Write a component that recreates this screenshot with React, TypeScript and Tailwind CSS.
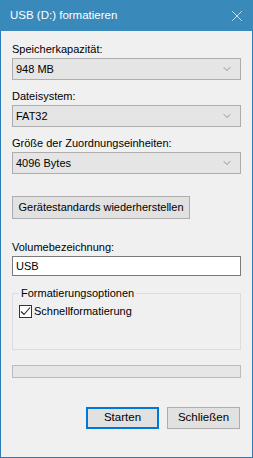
import { ChevronDown, X } from 'lucide-react';

const FONT = { fontFamily: '"Liberation Sans", "Noto Sans", sans-serif' };

function Combo({ value }: { value: string }) {
  return (
    <div className="mt-px flex h-[22px] w-[229px] items-center justify-between border border-[#adadad] bg-[#e5e5e5] pl-[3px] pr-[7px] text-[11px] text-black">
      <span className="leading-none">{value}</span>
      <ChevronDown size={12} strokeWidth={1.2} className="text-[#5a5a5a]" />
    </div>
  );
}

function Label({ text, mt }: { text: string; mt: string }) {
  return <div className={`${mt} h-4 whitespace-nowrap text-[11px] leading-4 text-black`}>{text}</div>;
}

export default function App() {
  return (
    <div style={FONT} className="flex h-[458px] w-[253px] flex-col border border-t-0 border-[#2b7bb5] bg-[#f0f0f0] text-[11px]">
      <div className="-mx-px flex h-[31px] shrink-0 items-center justify-between bg-[#3a89bb] pl-[10px] pr-[7px] text-white">
        <span className="text-[11.5px] leading-none">USB (D:) formatieren</span>
        <X size={18} strokeWidth={1} />
      </div>

      <div className="flex flex-col pl-[11px]">
        <Label text="Speicherkapazität:" mt="mt-[10px]" />
        <Combo value="948 MB" />
        <Label text="Dateisystem:" mt="mt-[8px]" />
        <Combo value="FAT32" />
        <Label text="Größe der Zuordnungseinheiten:" mt="mt-[8px]" />
        <Combo value="4096 Bytes" />

        <button className="mt-[22px] flex h-[23px] w-[178px] items-center justify-center whitespace-nowrap border border-[#adadad] bg-[#e1e1e1] text-[11px] leading-none text-black">
          Gerätestandards wiederherstellen
        </button>

        <Label text="Volumebezeichnung:" mt="mt-[20px]" />
        <div className="mt-px flex h-[20px] w-[229px] items-center border border-[#7a7a7a] bg-white pl-[3px] text-[11px] leading-none text-black">
          USB
        </div>

        <fieldset className="mt-[9px] h-[65px] w-[229px] border border-[#dcdcdc] px-[6px]">
          <legend className="px-[2px] text-[11px] leading-4 text-black">Formatierungsoptionen</legend>
          <div className="mt-[2px] flex items-center gap-[2px]">
            <div className="flex h-[13px] w-[13px] items-center justify-center border border-[#333] bg-white">
              <svg width="11" height="11" viewBox="0 0 11 11" fill="none">
                <path d="M1 5.5 L4 8.5 L10 1.5" stroke="#222" strokeWidth="1.1" />
              </svg>
            </div>
            <span className="text-[11px] leading-4 text-black">Schnellformatierung</span>
          </div>
        </fieldset>

        <div className="mt-[15px] h-[13px] w-[229px] border border-[#bcbcbc] bg-[#e6e6e6]" />

        <div className="mt-[29px] flex gap-[8px] pl-[74px]">
          <button className="flex h-[22px] w-[73px] items-center justify-center border-2 border-[#0078d7] bg-[#e1e1e1] text-[11.5px] leading-none text-black">
            Starten
          </button>
          <button className="flex h-[22px] w-[73px] items-center justify-center border border-[#adadad] bg-[#e1e1e1] text-[11.5px] leading-none text-black">
            Schließen
          </button>
        </div>
      </div>
    </div>
  );
}
